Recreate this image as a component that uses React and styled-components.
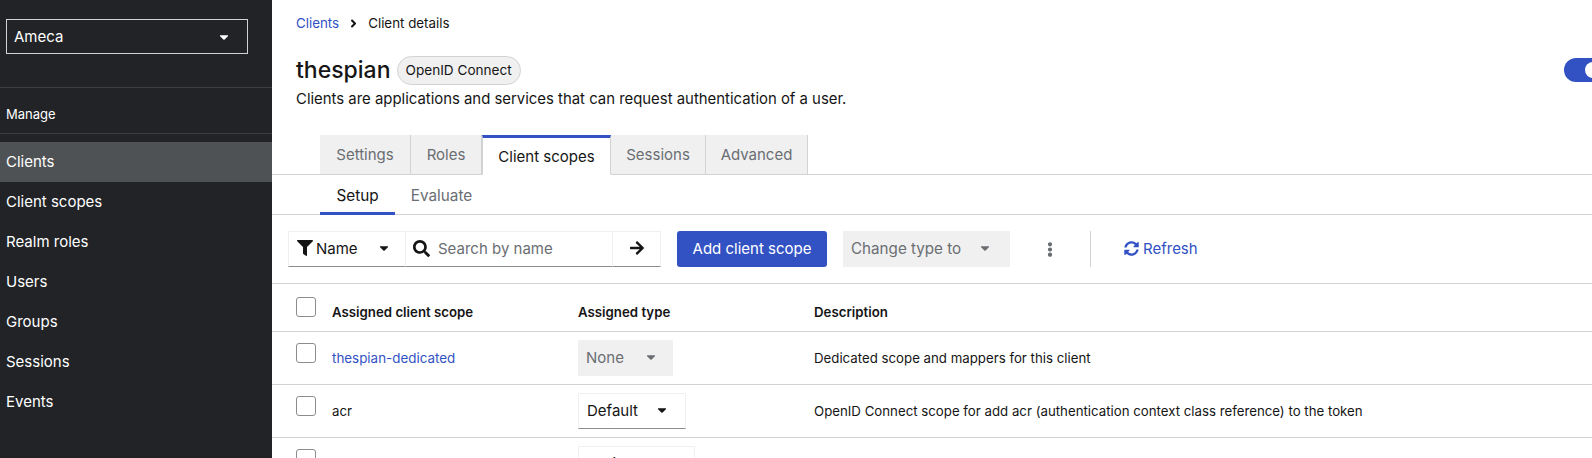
import styled, { createGlobalStyle } from "styled-components";
import {
  FaAngleRight,
  FaArrowRight,
  FaCaretDown,
  FaEllipsisV,
  FaFilter,
  FaSearch,
  FaSyncAlt,
} from "react-icons/fa";

const BLUE = "#3252c4";
const LINE = "#d2d2d2";

const GlobalStyle = createGlobalStyle`
  html, body {
    margin: 0;
    height: 100%;
    overflow: hidden;
    background: #fff;
  }
  body {
    font-family: Inter, "Noto Sans", "Liberation Sans", sans-serif;
    color: #151515;
  }
  * {
    box-sizing: border-box;
  }
`;

const Page = styled.div`
  display: flex;
  width: 1592px;
  height: 458px;
  overflow: hidden;
`;

const Sidebar = styled.aside`
  flex: 0 0 272px;
  background: #212327;
  color: #fff;
`;

const RealmBox = styled.div`
  padding: 19px 24px 33px 6px;
  border-bottom: 1px solid #3c3f42;
`;

const RealmSelect = styled.div`
  display: flex;
  align-items: center;
  justify-content: space-between;
  height: 35px;
  padding: 0 16px 0 7px;
  border: 1px solid #d2d2d2;
  font-size: 15px;
`;

const NavGroupTitle = styled.div`
  display: flex;
  align-items: center;
  height: 46px;
  padding: 6px 0 0 6px;
  font-size: 13px;
  border-bottom: 1px solid #3c3f42;
  margin-bottom: 8px;
`;

const NavItem = styled.div`
  display: flex;
  align-items: center;
  height: 40px;
  padding: 0 0 2px 6px;
  font-size: 15px;
  background: ${(p) => (p.$active ? "#4f5255" : "transparent")};
`;

const Main = styled.main`
  flex: 1;
  min-width: 0;
`;

const Header = styled.header`
  padding: 15px 0 0 24px;
`;

const Breadcrumb = styled.nav`
  display: flex;
  align-items: center;
  gap: 9px;
  height: 16px;
  font-size: 13.35px;
  svg {
    width: 11px;
    height: 13px;
  }
`;

const Crumb = styled.span`
  color: ${BLUE};
`;

const TitleRow = styled.div`
  display: flex;
  align-items: center;
  justify-content: space-between;
  margin-top: 24px;
  height: 30px;
`;

const TitleGroup = styled.div`
  display: flex;
  align-items: center;
  gap: 6px;
`;

const Title = styled.h1`
  margin: 0;
  font-size: 23px;
  font-weight: 500;
  line-height: 30px;
`;

const Badge = styled.span`
  display: inline-flex;
  align-items: center;
  height: 29px;
  padding: 0 8px;
  border: 1px solid #d2d2d2;
  border-radius: 15px;
  background: #f0f0f0;
  font-size: 13.6px;
`;

const Switch = styled.div`
  position: relative;
  width: 48px;
  height: 24px;
  margin-right: -20px;
  border-radius: 12px;
  background: ${BLUE};
  &::after {
    content: "";
    position: absolute;
    top: 4px;
    left: 21px;
    width: 16px;
    height: 16px;
    border-radius: 50%;
    background: #fff;
  }
`;

const Subtitle = styled.p`
  margin: 3px 0 0;
  font-size: 14.9px;
  line-height: 22px;
`;

const Tabs = styled.div`
  display: flex;
  height: 40px;
  margin-top: 25px;
  padding-left: 48px;
  border-bottom: 1px solid ${LINE};
`;

const Tab = styled.div`
  display: flex;
  align-items: center;
  justify-content: center;
  flex: 0 0 ${(p) => p.$w}px;
  height: 40px;
  font-size: 15px;
  color: ${(p) => (p.$active ? "#151515" : "#6a6e73")};
  background: ${(p) => (p.$active ? "#fff" : "#f0f0f0")};
  border-right: 1px solid ${LINE};
  border-top: ${(p) => (p.$active ? `3px solid ${BLUE}` : "0")};
  border-left: ${(p) => (p.$active ? `1px solid ${LINE}` : "0")};
  border-bottom: ${(p) => (p.$active ? "1px solid #fff" : `1px solid ${LINE}`)};
`;

const SubTabs = styled.div`
  display: flex;
  height: 40px;
  padding-left: 48px;
  border-bottom: 1px solid ${LINE};
`;

const SubTab = styled.div`
  display: flex;
  align-items: center;
  justify-content: center;
  flex: 0 0 ${(p) => p.$w}px;
  height: 40px;
  padding-top: ${(p) => (p.$active ? 3 : 1)}px;
  font-size: 15.3px;
  color: ${(p) => (p.$active ? "#151515" : "#6a6e73")};
  border-bottom: ${(p) => (p.$active ? `3px solid ${BLUE}` : "0")};
`;

const Toolbar = styled.div`
  display: flex;
  align-items: flex-start;
  height: 69px;
  padding: 16px 0 0 16px;
  border-bottom: 1px solid ${LINE};
`;

const SearchGroup = styled.div`
  display: flex;
  height: 36px;
`;

const SearchPart = styled.div`
  display: flex;
  align-items: center;
  width: ${(p) => p.$w}px;
  padding: 0 0 2px ${(p) => p.$pad}px;
  gap: ${(p) => p.$gap || 0}px;
  font-size: 15px;
  color: ${(p) => p.$color || "#151515"};
  border: 1px solid #f0f0f0;
  border-bottom: 1px solid #8a8d90;
  & + & {
    border-left: 0;
  }
`;

const FilterCaret = styled(FaCaretDown)`
  margin-left: 16px;
`;

const PrimaryButton = styled.button`
  height: 36px;
  width: 150px;
  margin-left: 16px;
  padding: 0 0 2px;
  border: 0;
  border-radius: 3px;
  background: ${BLUE};
  color: #fff;
  font: inherit;
  font-size: 15px;
`;

const DisabledSelect = styled.div`
  display: flex;
  align-items: center;
  justify-content: space-between;
  width: ${(p) => p.$w}px;
  height: 36px;
  margin-left: ${(p) => p.$ml || 0}px;
  padding: 0 ${(p) => p.$pr}px 2px 8px;
  background: #f0f0f0;
  color: #6a6e73;
  font-size: 15.2px;
`;

const Kebab = styled.div`
  display: flex;
  align-items: center;
  justify-content: center;
  width: 14px;
  height: 36px;
  margin-left: 33px;
  color: #6a6e73;
`;

const Divider = styled.div`
  width: 1px;
  height: 36px;
  margin: 0 33px;
  background: ${LINE};
`;

const RefreshLink = styled.div`
  display: flex;
  align-items: center;
  gap: 4px;
  height: 36px;
  padding-bottom: 2px;
  color: ${BLUE};
  font-size: 15px;
`;

const Row = styled.div`
  display: grid;
  grid-template-columns: 60px 246px 236px 1fr;
  height: ${(p) => p.$h}px;
  border-bottom: 1px solid ${LINE};
  font-size: 13.25px;
`;

const CheckCell = styled.div`
  padding: ${(p) => p.$top}px 0 0 24px;
`;

const Checkbox = styled.span`
  display: block;
  width: 20px;
  height: 20px;
  border: 1px solid #8a8d90;
  border-radius: 3px;
  background: #fff;
`;

const Cell = styled.div`
  display: flex;
  align-items: ${(p) => (p.$top ? "flex-start" : "center")};
  padding-top: ${(p) => p.$top || 0}px;
  font-weight: ${(p) => (p.$head ? 600 : 400)};
`;

const ScopeLink = styled.span`
  color: ${BLUE};
  font-size: 13.4px;
`;

const TypeSelect = styled.div`
  display: flex;
  align-items: center;
  justify-content: space-between;
  width: ${(p) => p.$w}px;
  height: 36px;
  padding: 0 ${(p) => p.$pr}px 2px 8px;
  font-size: 15px;
  background: ${(p) => (p.$disabled ? "#f0f0f0" : "#fff")};
  color: ${(p) => (p.$disabled ? "#6a6e73" : "#151515")};
  border: ${(p) => (p.$disabled ? "0" : "1px solid #f0f0f0")};
  border-bottom: ${(p) => (p.$disabled ? "0" : "1px solid #8a8d90")};
`;

const navItems = ["Clients", "Client scopes", "Realm roles", "Users", "Groups", "Sessions", "Events"];

const App = () => {
  return (
    <Page>
      <GlobalStyle />
      <Sidebar>
        <RealmBox>
          <RealmSelect>
            Ameca
            <FaCaretDown size={14} />
          </RealmSelect>
        </RealmBox>
        <NavGroupTitle>Manage</NavGroupTitle>
        {navItems.map((item, i) => (
          <NavItem key={item} $active={i === 0}>
            {item}
          </NavItem>
        ))}
      </Sidebar>
      <Main>
        <Header>
          <Breadcrumb>
            <Crumb>Clients</Crumb>
            <FaAngleRight />
            <span>Client details</span>
          </Breadcrumb>
          <TitleRow>
            <TitleGroup>
              <Title>thespian</Title>
              <Badge>OpenID Connect</Badge>
            </TitleGroup>
            <Switch />
          </TitleRow>
          <Subtitle>Clients are applications and services that can request authentication of a user.</Subtitle>
        </Header>
        <Tabs>
          <Tab $w={91}>Settings</Tab>
          <Tab $w={71}>Roles</Tab>
          <Tab $w={129} $active>Client scopes</Tab>
          <Tab $w={95}>Sessions</Tab>
          <Tab $w={102}>Advanced</Tab>
        </Tabs>
        <SubTabs>
          <SubTab $w={75} $active>Setup</SubTab>
          <SubTab $w={93}>Evaluate</SubTab>
        </SubTabs>
        <Toolbar>
          <SearchGroup>
            <SearchPart $w={118} $pad={8} $gap={3}>
              <FaFilter size={16} />
              Name
              <FilterCaret size={14} />
            </SearchPart>
            <SearchPart $w={207} $pad={7} $gap={8} $color="#6a6e73">
              <FaSearch size={17} color="#151515" />
              Search by name
            </SearchPart>
            <SearchPart $w={48} $pad={16}>
              <FaArrowRight size={16} />
            </SearchPart>
          </SearchGroup>
          <PrimaryButton>Add client scope</PrimaryButton>
          <DisabledSelect $w={167} $ml={16} $pr={18}>
            Change type to
            <FaCaretDown size={14} />
          </DisabledSelect>
          <Kebab>
            <FaEllipsisV size={15} />
          </Kebab>
          <Divider />
          <RefreshLink>
            <FaSyncAlt size={15} />
            Refresh
          </RefreshLink>
        </Toolbar>
        <Row $h={48}>
          <CheckCell $top={13}>
            <Checkbox />
          </CheckCell>
          <Cell $head $top={20}>Assigned client scope</Cell>
          <Cell $head $top={20}>Assigned type</Cell>
          <Cell $head $top={20}>Description</Cell>
        </Row>
        <Row $h={53}>
          <CheckCell $top={11}>
            <Checkbox />
          </CheckCell>
          <Cell>
            <ScopeLink>thespian-dedicated</ScopeLink>
          </Cell>
          <Cell>
            <TypeSelect $disabled $w={95} $pr={15}>
              None
              <FaCaretDown size={14} />
            </TypeSelect>
          </Cell>
          <Cell>Dedicated scope and mappers for this client</Cell>
        </Row>
        <Row $h={53}>
          <CheckCell $top={11}>
            <Checkbox />
          </CheckCell>
          <Cell>acr</Cell>
          <Cell>
            <TypeSelect $w={108} $pr={16}>
              Default
              <FaCaretDown size={14} />
            </TypeSelect>
          </Cell>
          <Cell>OpenID Connect scope for add acr (authentication context class reference) to the token</Cell>
        </Row>
        <Row $h={53}>
          <CheckCell $top={11}>
            <Checkbox />
          </CheckCell>
          <Cell />
          <Cell>
            <TypeSelect $w={117} $pr={16}>
              Optional
              <FaCaretDown size={14} />
            </TypeSelect>
          </Cell>
          <Cell />
        </Row>
      </Main>
    </Page>
  );
};

export default App;
